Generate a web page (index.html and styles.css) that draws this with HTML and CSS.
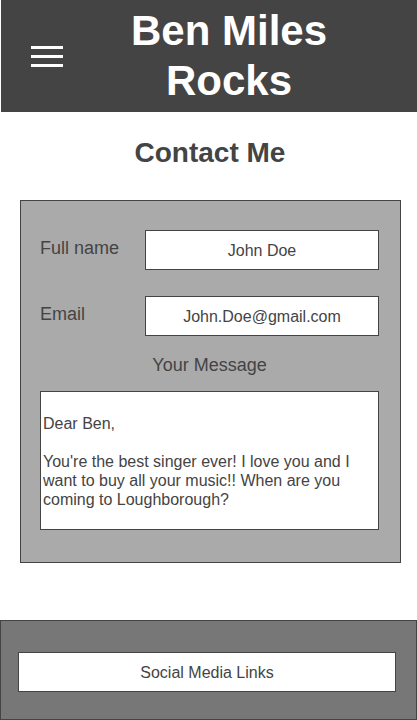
FILE: index.html
```html
<!DOCTYPE html>
<html lang="en">
<head>
<meta charset="utf-8">
<title>Ben Miles Rocks - Contact</title>
<link rel="stylesheet" href="styles.css">
</head>
<body>
<header class="site-header">
  <button class="menu-btn" aria-label="Menu">
    <span class="bar"></span><span class="bar"></span><span class="bar"></span>
  </button>
  <h1 class="site-title">Ben Miles Rocks</h1>
</header>
<main>
  <h2 class="page-title">Contact Me</h2>
  <form class="contact-form">
    <div class="field-row">
      <label class="field-label">Full name</label>
      <div class="field-input">John Doe</div>
    </div>
    <div class="field-row">
      <label class="field-label">Email</label>
      <div class="field-input">John.Doe@gmail.com</div>
    </div>
    <div class="message-label">Your Message</div>
    <div class="message-box">
      <p>Dear Ben,</p>
      <p>You're the best singer ever! I love you and I want to buy all your music!! When are you coming to Loughborough?</p>
    </div>
  </form>
</main>
<footer class="site-footer">
  <div class="social-box">Social Media Links</div>
</footer>
</body>
</html>
```

FILE: styles.css
```css
* { box-sizing: border-box; }
html, body { margin: 0; padding: 0; }
body {
  font-family: "Liberation Sans", Arial, sans-serif;
  color: #444;
  background: #fff;
  width: 417px;
}
.site-header {
  margin-left: 1px;
  height: 112px;
  background: #444;
  display: flex;
  align-items: center;
}
.menu-btn {
  margin-left: 30px;
  width: 32px;
  padding: 0;
  border: 0;
  background: none;
  display: flex;
  flex-direction: column;
  gap: 6px;
}
.bar {
  display: block;
  height: 3px;
  width: 32px;
  background: #fff;
}
.site-title {
  flex: 1;
  margin: 0;
  text-align: center;
  color: #fff;
  font-size: 42px;
  line-height: 50px;
  font-weight: bold;
  padding-left: 30px;
  padding-right: 52px;
}
.page-title {
  margin: 25px 0 31px;
  text-align: center;
  font-size: 28px;
  line-height: 32px;
  font-weight: bold;
  padding-left: 3px;
}
.contact-form {
  margin: 0 0 0 20px;
  width: 381px;
  background: #aaa;
  border: 1px solid #444;
  padding: 29px 21px 32px 19px;
}
.field-row {
  display: flex;
  align-items: flex-start;
  margin-bottom: 26px;
}
.field-row + .field-row { margin-bottom: 17px; }
.field-label {
  width: 105px;
  font-size: 18px;
  line-height: 21px;
  padding-top: 8px;
}
.field-input {
  width: 234px;
  height: 40px;
  background: #fff;
  border: 1px solid #444;
  display: flex;
  align-items: center;
  justify-content: center;
  font-size: 16px;
  padding-top: 2px;
}
.message-label {
  text-align: center;
  font-size: 18px;
  line-height: 21px;
  margin-bottom: 17px;
  padding-top: 2px;
  height: 23px;
  margin-bottom: 15px;
}
.message-box {
  height: 139px;
  background: #fff;
  border: 1px solid #444;
  padding: 22px 2px 2px 2px;
  font-size: 16px;
  line-height: 19px;
}
.message-box p { margin: 0 0 19px; }
.site-footer {
  margin-top: 57px;
  height: 100px;
  background: #777;
  border: 1px solid #444;
  padding: 31px 20px 0 17px;
}
.social-box {
  height: 40px;
  background: #fff;
  border: 1px solid #444;
  display: flex;
  align-items: center;
  justify-content: center;
  font-size: 16px;
  padding-top: 2px;
}
```
